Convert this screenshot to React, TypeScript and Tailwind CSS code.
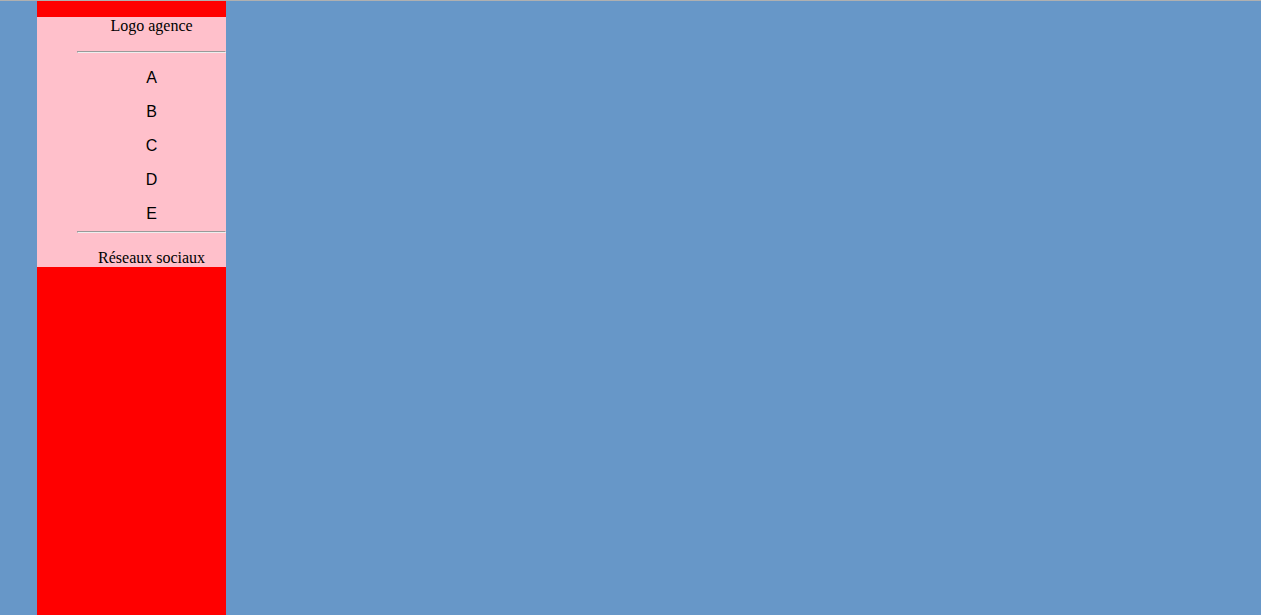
const links = ["A", "B", "C", "D", "E"];

function Divider() {
  return <hr className="h-0.5 border border-t-[#9a9a9a] border-l-[#9a9a9a] border-r-[#eeeeee] border-b-[#eeeeee]" />;
}

export default function App() {
  return (
    <div className="min-h-screen flex border-t border-[#b0b0b0] bg-[#6797c8] text-base leading-[18px] text-black">
      <aside className="ml-[37px] w-[15%] bg-[#ff0000] pt-4">
        <div className="bg-[#ffc0cb] pl-10 text-center font-['Liberation_Serif',serif]">
          <p className="pb-4">Logo agence</p>
          <Divider />
          <nav className="pt-4 font-['Liberation_Sans',sans-serif]">
            <ul className="flex flex-col gap-4">
              {links.map((link) => (
                <li key={link}>
                  <a href="#">{link}</a>
                </li>
              ))}
            </ul>
          </nav>
          <div className="pt-2">
            <Divider />
          </div>
          <p className="pt-4">Réseaux sociaux</p>
        </div>
      </aside>
    </div>
  );
}
